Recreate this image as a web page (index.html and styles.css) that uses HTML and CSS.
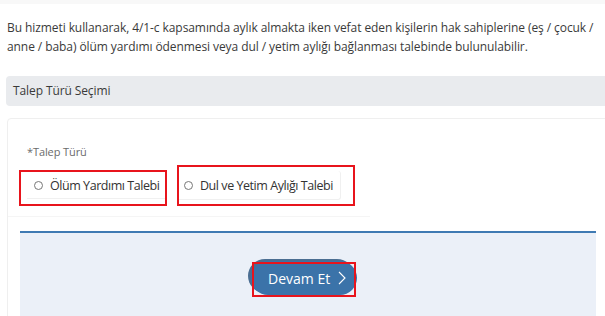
FILE: index.html
```html
<!DOCTYPE html>
<html lang="tr">
<head>
<meta charset="utf-8">
<title>Talep Türü Seçimi</title>
<link rel="stylesheet" href="styles.css">
</head>
<body>
<div class="page">
  <p class="intro">Bu hizmeti kullanarak, 4/1-c kapsamında aylık almakta iken vefat eden kişilerin hak sahiplerine (eş / çocuk / anne / baba) ölüm yardımı ödenmesi veya dul / yetim aylığı bağlanması talebinde bulunulabilir.</p>
  <div class="section-head">Talep Türü Seçimi</div>
  <div class="card">
    <div class="form-group">
      <div class="label">*Talep Türü</div>
      <div class="options">
        <div class="mark mark-1">
          <label class="option"><span class="radio"></span>Ölüm Yardımı Talebi</label>
        </div>
        <div class="mark mark-2">
          <label class="option option-boxed"><span class="radio"></span>Dul ve Yetim Aylığı Talebi</label>
        </div>
      </div>
    </div>
    <div class="footer">
      <div class="btn-wrap">
        <button class="btn"><span>Devam Et</span><svg class="chev" width="8" height="14" viewBox="0 0 8 14"><path d="M1 1 L7 7 L1 13" fill="none" stroke="#fff" stroke-width="1.1"/></svg></button>
      </div>
    </div>
  </div>
</div>
</body>
</html>
```

FILE: styles.css
```css
html, body {
  margin: 0;
  padding: 0;
  background: #fff;
  overflow: hidden;
}
.page {
  width: 605px;
  height: 316px;
  overflow: hidden;
  font-family: "Open Sans", "Liberation Sans", sans-serif;
  color: #3a3a3a;
  border-top: 4px solid #f8f8f8;
  box-sizing: border-box;
}
.intro {
  margin: 0;
  padding: 14px 0 0 7px;
  font-size: 12px;
  line-height: 19px;
  letter-spacing: -0.08px;
  width: 588px;
}
.section-head {
  margin: 20px 0 0 6px;
  height: 30px;
  background: #e9ebee;
  border-radius: 4px 0 0 4px;
  font-size: 12px;
  line-height: 30px;
  padding-left: 7px;
  letter-spacing: -0.1px;
}
.card {
  margin: 12px 0 0 7px;
  width: 640px;
  border: 1px solid #efefef;
  border-radius: 4px;
  height: 260px;
  box-sizing: border-box;
}
.form-group {
  padding: 26px 0 0 0;
  height: 98px;
  box-sizing: border-box;
  width: 362px;
  border-bottom: 1px solid #f5f5f5;
}
.label {
  padding-left: 19px;
  font-size: 11px;
  line-height: 14px;
  color: #6b6b6b;
  letter-spacing: -0.1px;
}
.options {
  display: flex;
  align-items: flex-start;
  gap: 10px;
  margin-top: 6px;
  padding-left: 11px;
}
.mark {
  border: 2px solid #e8141c;
  box-sizing: border-box;
}
.mark-1 {
  width: 148px;
  height: 36px;
  margin-top: 5px;
}
.mark-2 {
  width: 178px;
  height: 41px;
}
.option {
  display: flex;
  align-items: center;
  font-size: 12.5px;
  color: #333;
  letter-spacing: -0.45px;
  white-space: nowrap;
}
.mark-1 .option {
  margin: 0 0 0 6px;
  height: 26px;
  padding-left: 7px;
  border-bottom: 1px solid #f0f0f0;
}
.option-boxed {
  margin: 4px 12px 0 0;
  height: 28px;
  padding-left: 5px;
  border: 1px solid #f0f0f0;
  border-left: none;
  border-top: none;
  border-radius: 0 3px 3px 0;
}
.radio {
  width: 7px;
  height: 7px;
  border: 1px solid #777;
  border-radius: 50%;
  margin-right: 7px;
  flex: none;
}
.footer {
  margin: 14px 0 0 12px;
  width: 576px;
  height: 100px;
  background: #ebf0f8;
  border-top: 2px solid #3f7ab3;
  box-sizing: border-box;
  padding: 28px 0 0 231px;
}
.btn-wrap {
  position: relative;
  display: inline-block;
}
.btn-wrap::after {
  content: "";
  position: absolute;
  left: 1px;
  top: 1px;
  width: 104px;
  height: 35px;
  border: 2px solid #e8141c;
  box-sizing: border-box;
  pointer-events: none;
}
.btn {
  display: flex;
  align-items: center;
  gap: 8px;
  height: 34px;
  padding: 0 11px 0 17px;
  border: none;
  border-radius: 17px;
  background: #3b73a9;
  color: #fff;
  font-family: "Open Sans", "Liberation Sans", sans-serif;
  font-size: 14px;
  box-shadow: -3px -2px 0 #4b6e92;
}
.chev {
  display: block;
}
```
